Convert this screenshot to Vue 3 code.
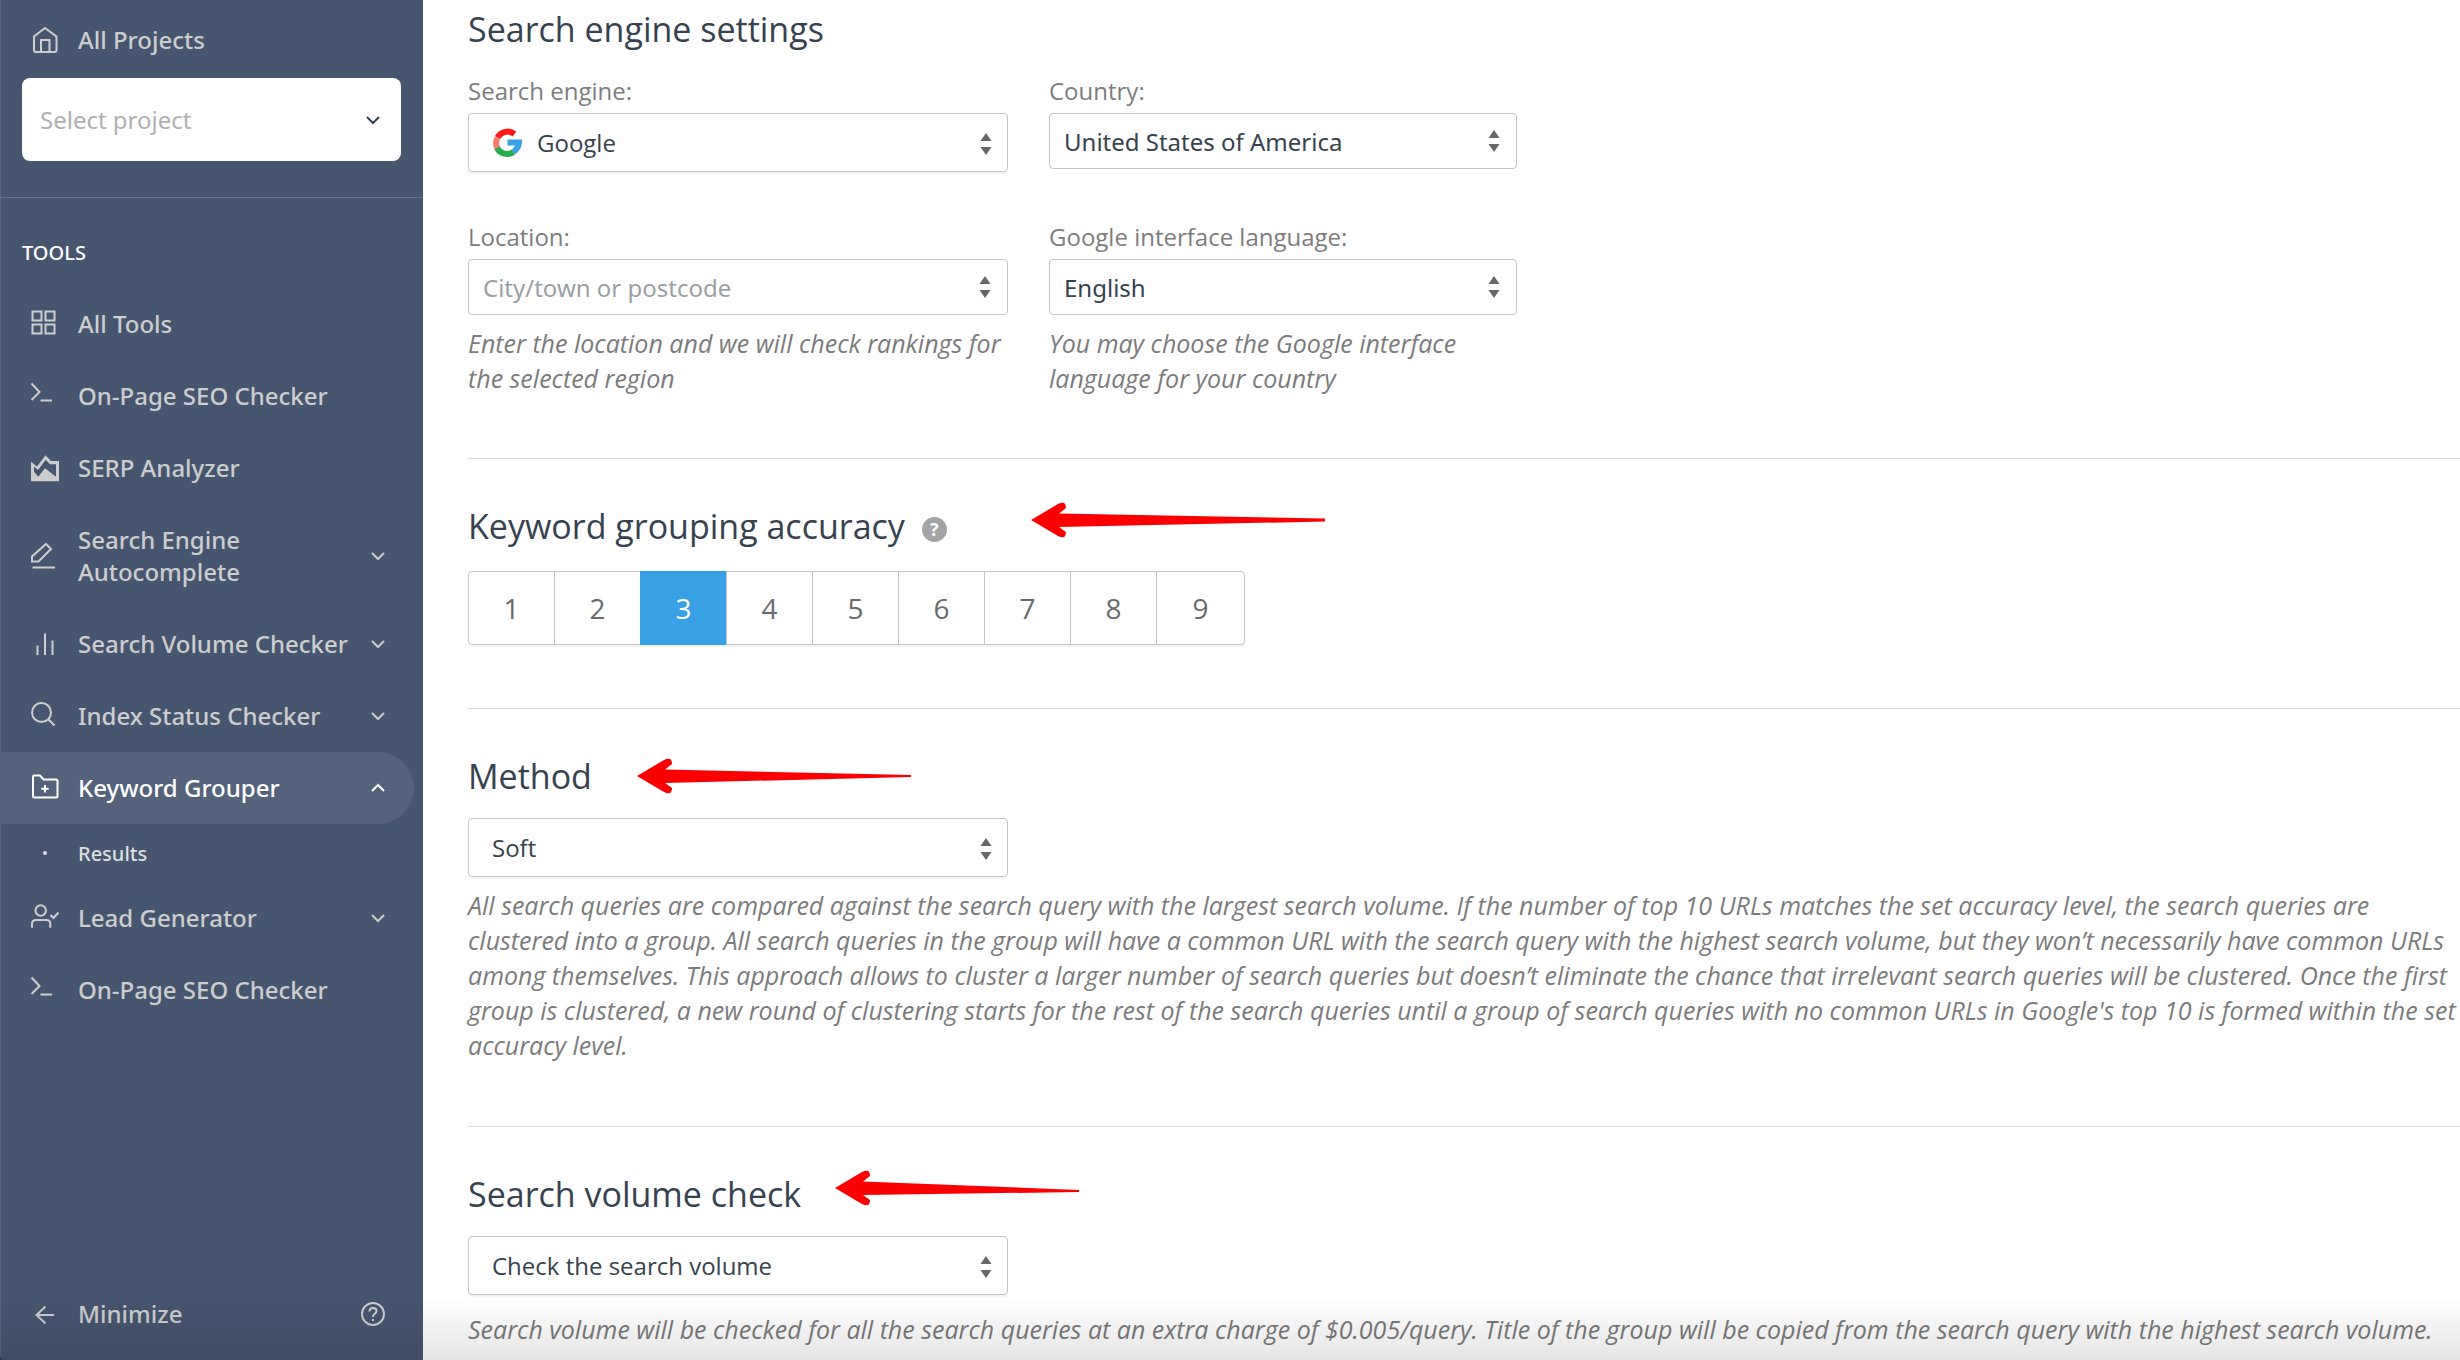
<script setup>
    import { ref } from 'vue'

    const project = ref('')
    const engine = ref('Google')
    const country = ref('United States of America')
    const language = ref('English')
    const method = ref('Soft')
    const volume = ref('Check the search volume')
    const accuracy = ref(3)

    const tools = [
        { name: 'All Tools', icon: 'grid' },
        { name: 'On-Page SEO Checker', icon: 'prompt' },
        { name: 'SERP Analyzer', icon: 'area' },
        { name: 'Search Engine Autocomplete', icon: 'pencil', more: true },
        { name: 'Search Volume Checker', icon: 'bars', more: true },
        { name: 'Index Status Checker', icon: 'search', more: true },
        { name: 'Keyword Grouper', icon: 'folder', more: true, active: true, children: ['Results'] },
        { name: 'Lead Generator', icon: 'lead', more: true },
        { name: 'On-Page SEO Checker', icon: 'prompt' }
    ]

    const icons = {
        home: 'M16 4 L27.5 12.5 V26 Q27.5 28 25.5 28 H7 Q5 28 5 26 V12.5 Z M12 28 V16 H20.500 V28',
        grid: 'M3.500 3.500 H12.500 V12.500 H3.500 Z M16.500 3.500 H25.500 V12.500 H16.500 Z M3.500 16.500 H12.500 V25.500 H3.500 Z M16.500 16.500 H25.500 V25.500 H16.500 Z',
        prompt: 'M2.500 3.500 L10.500 12 L2.500 20 M11.500 20.500 H23',
        pencil: 'M17 4 L22 9 L9.500 21.500 H3 V16.500 Z M3.500 27.500 H26',
        bars: 'M8.500 17.500 V27 M16 5.500 V27 M23.500 12.500 V27',
        search: 'M3 12.500 a9.500 9.500 0 1 0 19 0 a9.500 9.500 0 1 0 -19 0 M19.500 19.500 L25.500 25.500',
        folder: 'M4 5 Q4 3.500 5.500 3.500 H11 L14.500 7.500 H27 Q28.500 7.500 28.500 9 V24 Q28.500 25.500 27 25.500 H5.500 Q4 25.500 4 24 Z M16 13 V20.500 M12.300 16.700 H19.700',
        lead: 'M6.500 8.500 a5.200 5.200 0 1 0 10.400 0 a5.200 5.200 0 1 0 -10.400 0 M3 25.700 V22 Q3 18 7 18 H17.300 Q21.300 18 21.300 22 V25.700 M21.500 13 L24.500 16 L29.500 10.500',
        back: 'M7.500 17 H25 M16.500 8.500 L7.500 17 L16.500 25.500'
    }
</script>

<template>
    <div class="page">
        <aside class="sidebar">
            <a href="#" class="item">
                <svg class="icon" viewBox="0 0 32 32"><path :d="icons.home" /></svg>
                <span class="name">All Projects</span>
            </a>
            <div class="project">
                <select v-model="project" aria-label="Select project">
                    <option value="">Select project</option>
                </select>
                <svg class="chevron" viewBox="0 0 16 16"><path d="M2 5 L8 11 L14 5" /></svg>
            </div>
            <h3 class="group-title">TOOLS</h3>
            <nav>
                <template v-for="(tool, i) in tools" :key="i">
                    <a href="#" class="item" :class="{ active: tool.active }">
                        <svg v-if="tool.icon === 'area'" class="icon filled" viewBox="0 0 32 32">
                            <path fill-rule="evenodd" d="M2 9.500 L8 14.500 L16.500 3.300 L22 9 H30 V29.300 H2 Z M5 14.500 V19.700 L9.300 24.700 L16 16.300 L27 24.700 V12.300 H21 L16.700 7.700 L9 18 Z" />
                        </svg>
                        <svg v-else class="icon" viewBox="0 0 32 32"><path :d="icons[tool.icon]" /></svg>
                        <span class="name">{{ tool.name }}</span>
                        <svg v-if="tool.more" class="chevron" viewBox="0 0 16 16">
                            <path :d="tool.active ? 'M2 11 L8 5 L14 11' : 'M2 5 L8 11 L14 5'" />
                        </svg>
                    </a>
                    <a v-for="child in tool.children" :key="child" href="#" class="sub-item">
                        <span class="dot"></span>
                        <span>{{ child }}</span>
                    </a>
                </template>
            </nav>
            <div class="item bottom">
                <button type="button" class="minimize">
                    <svg class="icon" viewBox="0 0 32 32"><path :d="icons.back" /></svg>
                    <span class="name">Minimize</span>
                </button>
                <button type="button" class="help" aria-label="Help">
                    <svg viewBox="0 0 26 26">
                        <circle cx="13" cy="13" r="11" />
                        <path d="M9.500 10.500 Q9.500 7 13 7 Q16.500 7 16.500 10 Q16.500 12 14.500 13 Q13 14 13 16 M13 18 V20" />
                    </svg>
                </button>
            </div>
        </aside>

        <main class="content">
            <section class="first">
                <h2>Search engine settings</h2>
                <div class="fields">
                    <div class="field">
                        <label for="engine">Search engine:</label>
                        <div class="box tall">
                            <svg class="google" viewBox="0 0 30 30">
                                <path stroke="#ff1a1a" d="M5.500 9.500 A11.500 11.500 0 0 1 22.500 6" />
                                <path stroke="#fb7b6b" d="M5.500 9.500 A12 12 0 0 0 5.500 20.500" />
                                <path stroke="#23ad4b" d="M5 20 A11.500 11.500 0 0 0 21.500 24" />
                                <path stroke="#38a0e5" d="M21.500 24 Q26.500 20 27 14.500 H15.500" />
                            </svg>
                            <select id="engine" v-model="engine">
                                <option>Google</option>
                            </select>
                            <svg class="updown" viewBox="0 0 12 22"><path d="M6 0 L11.500 8 H0.500 Z M6 22 L0.500 14 H11.500 Z" /></svg>
                        </div>
                    </div>
                    <div class="field">
                        <label for="country">Country:</label>
                        <div class="box">
                            <select id="country" v-model="country">
                                <option>United States of America</option>
                            </select>
                            <svg class="updown" viewBox="0 0 12 22"><path d="M6 0 L11.500 8 H0.500 Z M6 22 L0.500 14 H11.500 Z" /></svg>
                        </div>
                    </div>
                    <div class="field">
                        <label for="location">Location:</label>
                        <div class="box">
                            <input id="location" type="text" placeholder="City/town or postcode">
                            <svg class="updown" viewBox="0 0 12 22"><path d="M6 0 L11.500 8 H0.500 Z M6 22 L0.500 14 H11.500 Z" /></svg>
                        </div>
                        <p class="hint">Enter the location and we will check rankings for<br>the selected region</p>
                    </div>
                    <div class="field">
                        <label for="language">Google interface language:</label>
                        <div class="box">
                            <select id="language" v-model="language">
                                <option>English</option>
                            </select>
                            <svg class="updown" viewBox="0 0 12 22"><path d="M6 0 L11.500 8 H0.500 Z M6 22 L0.500 14 H11.500 Z" /></svg>
                        </div>
                        <p class="hint">You may choose the Google interface<br>language for your country</p>
                    </div>
                </div>
            </section>

            <section>
                <h2>Keyword grouping accuracy <span class="tip">?</span></h2>
                <svg class="arrow arrow-accuracy" viewBox="0 0 294 36">
                    <path d="M0 18 L27 2 Q35 -2 35 6 L28 11.500 L294 16.500 V19.500 L28 25 L35 30 Q35 38 27 34 Z" />
                </svg>
                <div class="levels">
                    <button
                        v-for="n in 9"
                        :key="n"
                        type="button"
                        :class="{ selected: n === accuracy }"
                        @click="accuracy = n"
                    >{{ n }}</button>
                </div>
            </section>

            <section>
                <h2><label for="method">Method</label></h2>
                <svg class="arrow arrow-method" viewBox="0 0 274 36">
                    <path d="M0 18 L27 2 Q35 -2 35 6 L28 11.500 L274 17 V19 L28 25 L35 30 Q35 38 27 34 Z" />
                </svg>
                <div class="box tall wide">
                    <select id="method" v-model="method">
                        <option>Soft</option>
                    </select>
                    <svg class="updown" viewBox="0 0 12 22"><path d="M6 0 L11.500 8 H0.500 Z M6 22 L0.500 14 H11.500 Z" /></svg>
                </div>
                <p class="hint">
                    All search queries are compared against the search query with the largest search volume. If the number of top 10 URLs matches the set accuracy level, the search queries are<br>
                    clustered into a group. All search queries in the group will have a common URL with the search query with the highest search volume, but they won’t necessarily have common URLs<br>
                    among themselves. This approach allows to cluster a larger number of search queries but doesn’t eliminate the chance that irrelevant search queries will be clustered. Once the first<br>
                    group is clustered, a new round of clustering starts for the rest of the search queries until a group of search queries with no common URLs in Google's top 10 is formed within the set<br>
                    accuracy level.
                </p>
            </section>

            <section class="last">
                <h2><label for="volume">Search volume check</label></h2>
                <svg class="arrow arrow-volume" viewBox="0 0 244 36">
                    <path d="M0 18 L27 2 Q35 -2 35 6 L28 11.500 L244 20 V22 L28 25 L35 30 Q35 38 27 34 Z" />
                </svg>
                <div class="box tall wide">
                    <select id="volume" v-model="volume">
                        <option>Check the search volume</option>
                    </select>
                    <svg class="updown" viewBox="0 0 12 22"><path d="M6 0 L11.500 8 H0.500 Z M6 22 L0.500 14 H11.500 Z" /></svg>
                </div>
                <p class="hint">Search volume will be checked for all the search queries at an extra charge of $0.005/query. Title of the group will be copied from the search query with the highest search volume.</p>
            </section>
        </main>
        <div class="fade"></div>
    </div>
</template>

<style>
    body {
        margin: 0;
        background: #36424c;
    }
</style>

<style scoped>
    .page {
        display: flex;
        height: 100vh;
        overflow: hidden;
        font-family: "Open Sans", "Noto Sans", sans-serif;
        font-size: 24px;
    }

    select,
    input,
    button {
        font: inherit;
        color: inherit;
        border: 0;
        padding: 0;
        margin: 0;
        background: none;
    }

    select {
        appearance: none;
    }

    /* sidebar */
    .sidebar {
        display: flex;
        flex-direction: column;
        flex: none;
        box-sizing: border-box;
        width: 423px;
        padding: 4px 0 10px;
        background: #475670;
        border-bottom-left-radius: 6px;
        box-shadow: inset 1px 0 #566580;
        color: #cbcdcf;
        font-family: "Noto Sans", sans-serif;
    }

    .item {
        display: flex;
        align-items: center;
        box-sizing: border-box;
        min-height: 72px;
        padding: 20px 37px 20px 29px;
        margin-right: 9px;
        line-height: 32px;
        color: inherit;
        text-decoration: none;
        font-weight: 500;
    }

    .item.active {
        background: #54637b;
        border-radius: 0 36px 36px 0;
        color: #fff;
    }

    .icon {
        flex: none;
        width: 32px;
        height: 32px;
        margin-right: 17px;
        fill: none;
        stroke: currentColor;
        stroke-width: 2;
    }

    .icon.filled {
        fill: currentColor;
        stroke: none;
    }

    .name {
        flex: 1;
    }

    .item .chevron {
        margin-right: -9px;
    }

    .chevron {
        flex: none;
        width: 16px;
        height: 16px;
        fill: none;
        stroke: currentColor;
        stroke-width: 2;
    }

    .project {
        display: flex;
        align-items: center;
        height: 83px;
        margin: 2px 22px 36px;
        padding: 0 20px 0 18px;
        box-sizing: border-box;
        border-radius: 8px;
        background: #fff;
        color: #333f4d;
    }

    .project select {
        flex: 1;
        color: #aeb0b3;
    }

    .group-title {
        margin: 0;
        padding: 38px 22px 18px;
        border-top: 1px solid #65728a;
        font-size: 20px;
        line-height: 34px;
        font-weight: 500;
        color: #fff;
    }

    .sub-item {
        display: flex;
        align-items: center;
        height: 58px;
        padding-left: 43px;
        gap: 31px;
        color: #dcdee0;
        text-decoration: none;
        font-size: 20px;
        font-weight: 500;
    }

    .dot {
        width: 4px;
        height: 4px;
        border-radius: 2px;
        background: currentColor;
    }

    .bottom {
        margin-top: auto;
        justify-content: space-between;
    }

    .minimize {
        display: flex;
        align-items: center;
        line-height: 32px;
    }

    .help {
        width: 26px;
        height: 26px;
        margin-right: -9px;
    }

    .help svg {
        display: block;
        fill: none;
        stroke: currentColor;
        stroke-width: 2;
    }

    /* settings form */
    .content {
        flex: 1;
        min-width: 0;
        padding-left: 45px;
        overflow: hidden;
        background: #fff;
    }

    section {
        position: relative;
        padding: 43px 0 63px;
        border-bottom: 1px solid #dcdcdc;
    }

    section.first {
        padding: 5px 0 62px;
    }

    section.last {
        border: 0;
    }

    h2 {
        display: flex;
        align-items: center;
        margin: 0 0 18px;
        font-size: 34px;
        line-height: 48px;
        font-weight: 400;
        color: #36424f;
    }

    .first h2 {
        margin-bottom: 21px;
    }

    .fields {
        display: grid;
        grid-template-columns: 540px 468px;
        column-gap: 41px;
        row-gap: 48px;
    }

    .field label {
        display: block;
        margin-bottom: 5px;
        line-height: 34px;
        color: #7d7d7d;
    }

    .box {
        display: flex;
        align-items: center;
        box-sizing: border-box;
        height: 56px;
        padding: 0 16px 0 14px;
        border: 1px solid #c3c5c7;
        border-radius: 4px;
        color: #36424c;
        font-family: "Noto Sans", sans-serif;
    }

    .box select,
    .box input {
        flex: 1;
        min-width: 0;
    }

    .box input::placeholder {
        color: #9b9fa3;
        opacity: 1;
    }

    .box.tall {
        height: 59px;
        padding: 0 15px 0 23px;
        box-shadow: 0 2px 2px rgba(0, 0, 0, .06);
        font-family: "Open Sans", sans-serif;
    }

    .box.tall .updown {
        margin-top: 3px;
    }

    .box.wide {
        width: 540px;
    }

    .google {
        width: 30px;
        height: 30px;
        margin-right: 15px;
        fill: none;
        stroke-width: 6;
    }

    .updown {
        flex: none;
        width: 12px;
        height: 22px;
        fill: #65686b;
        pointer-events: none;
    }

    .hint {
        margin: 11px 0 0;
        font-size: 25px;
        line-height: 35px;
        font-style: italic;
        color: #7b7b7b;
        white-space: nowrap;
    }

    .last .hint {
        margin-top: 17px;
    }

    .tip {
        width: 25px;
        height: 25px;
        margin: 6px 0 0 17px;
        border-radius: 50%;
        background: #a2a4a6;
        color: #fff;
        font-size: 18px;
        line-height: 25px;
        font-weight: 700;
        text-align: center;
    }

    .levels {
        display: inline-flex;
        box-sizing: border-box;
        height: 74px;
        margin-top: 3px;
        border: 1px solid #c3c5c7;
        border-radius: 4px;
        box-shadow: 0 2px 2px rgba(0, 0, 0, .06);
        vertical-align: top;
    }

    .levels button {
        box-sizing: border-box;
        width: 86px;
        border-left: 1px solid #c3c5c7;
        color: #686b6e;
        font-size: 28px;
        font-weight: 500;
    }

    .levels button:first-child {
        width: 85px;
        border: 0;
    }

    .levels button:last-child {
        width: 88px;
    }

    .levels button.selected {
        margin: -1px 0;
        border-color: #38a0e5;
        background: #38a0e5;
        color: #fff;
    }

    /* red pointers next to the headings */
    .arrow {
        position: absolute;
        top: 43px;
        height: 36px;
        fill: #fb0000;
    }

    .arrow-accuracy {
        left: 563px;
    }

    .arrow-method {
        left: 169px;
        top: 49px;
    }

    .arrow-volume {
        left: 367px;
    }

    .fade {
        position: fixed;
        left: 0;
        right: 0;
        bottom: 0;
        height: 64px;
        background: linear-gradient(rgba(0, 0, 0, 0), rgba(0, 0, 0, .1));
        pointer-events: none;
    }
</style>
